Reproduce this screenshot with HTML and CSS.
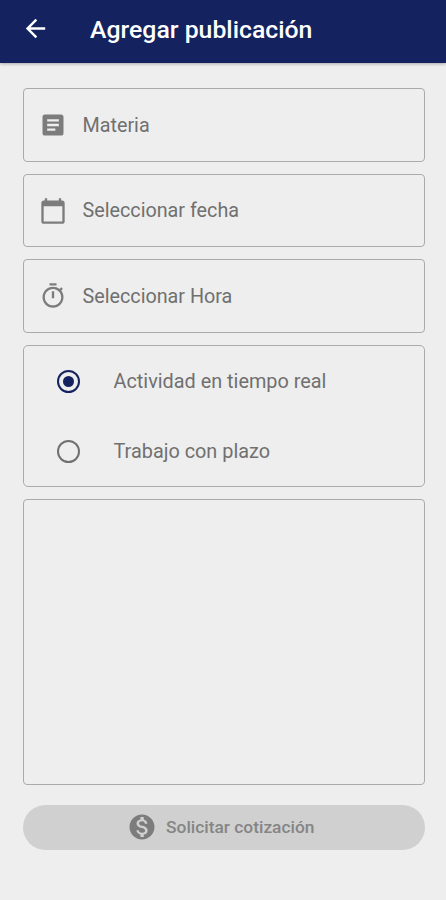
FILE: index.html
```
<!DOCTYPE html>
<html lang="es">
<head>
    <meta charset="UTF-8" />
    <meta name="viewport" content="width=device-width, initial-scale=1.0" />
    <title>Agregar publicación</title>
    <link rel="stylesheet" href="styles.css">
</head>
<body>
    <header class="app-bar">
        <svg class="back-icon" viewBox="0 0 24 24"><path d="M20 11H7.83l5.59-5.59L12 4l-8 8 8 8 1.41-1.41L7.83 13H20v-2z"/></svg>
        <h1>Agregar publicación</h1>
    </header>

    <main class="form">
        <div class="field">
            <svg class="field-icon" viewBox="0 0 24 24"><path d="M19 3H5c-1.1 0-2 .9-2 2v14c0 1.1.9 2 2 2h14c1.1 0 2-.9 2-2V5c0-1.1-.9-2-2-2zm-5 14H7v-2h7v2zm3-4H7v-2h10v2zm0-4H7V7h10v2z"/></svg>
            <span>Materia</span>
        </div>
        <div class="field">
            <svg class="field-icon" viewBox="0 0 24 24"><path d="M20 3h-1V1h-2v2H7V1H5v2H4c-1.1 0-2 .9-2 2v16c0 1.1.9 2 2 2h16c1.1 0 2-.9 2-2V5c0-1.1-.9-2-2-2zm0 18H4V8h16v13z"/></svg>
            <span>Seleccionar fecha</span>
        </div>
        <div class="field">
            <svg class="field-icon" viewBox="0 0 24 24"><path d="M15 1H9v2h6V1zm-4 13h2V8h-2v6zm8.03-6.61l1.42-1.42c-.43-.51-.9-.99-1.41-1.41l-1.42 1.42C16.07 4.74 14.12 4 12 4c-4.97 0-9 4.03-9 9s4.02 9 9 9 9-4.03 9-9c0-2.12-.74-4.07-1.97-5.61zM12 20c-3.87 0-7-3.13-7-7s3.13-7 7-7 7 3.13 7 7-3.13 7-7 7z"/></svg>
            <span>Seleccionar Hora</span>
        </div>

        <div class="options">
            <div class="option">
                <span class="radio selected"></span>
                <span>Actividad en tiempo real</span>
            </div>
            <div class="option">
                <span class="radio"></span>
                <span>Trabajo con plazo</span>
            </div>
        </div>

        <div class="description"></div>

        <button class="submit-btn" disabled>
            <svg class="money-icon" viewBox="0 0 24 24"><path d="M12 2C6.48 2 2 6.48 2 12s4.48 10 10 10 10-4.48 10-10S17.52 2 12 2zm1.41 16.09V20h-2.67v-1.93c-1.71-.36-3.16-1.46-3.27-3.4h1.96c.1 1.05.82 1.87 2.65 1.87 1.96 0 2.4-.98 2.4-1.59 0-.83-.44-1.61-2.67-2.14-2.48-.6-4.18-1.62-4.18-3.67 0-1.72 1.39-2.84 3.11-3.21V4h2.67v1.95c1.86.45 2.79 1.86 2.85 3.39H14.3c-.05-1.11-.64-1.87-2.22-1.87-1.5 0-2.4.68-2.4 1.64 0 .84.65 1.39 2.67 1.91s4.18 1.39 4.18 3.91c-.01 1.83-1.38 2.83-3.12 3.16z"/></svg>
            <span>Solicitar cotización</span>
        </button>
    </main>
</body>
</html>
```
FILE: styles.css
```
:root {
    --bg-color: #eeeeee;
    --bar-color: #14235f;
    --text-color: #707070;
    --icon-color: #7c7c7c;
    --border-color: #aaaaaa;
}
* {
    box-sizing: border-box;
}
body {
    font-family: Roboto, sans-serif;
    margin: 0;
    background-color: var(--bg-color);
    color: var(--text-color);
}
svg {
    fill: currentColor;
    flex-shrink: 0;
}
.app-bar {
    display: flex;
    align-items: center;
    height: 63px;
    padding: 0 21px 6px;
    background: var(--bar-color);
    color: #ffffff;
    box-shadow: 0 1px 3px rgba(0, 0, 0, 0.3);
}
.back-icon {
    width: 29px;
    height: 29px;
}
.app-bar h1 {
    margin: 1px 0 0 40px;
    font-size: 24.8px;
    font-weight: 500;
}
.form {
    display: flex;
    flex-direction: column;
    gap: 12px;
    padding: 25px 21px 0 23px;
}
.field {
    display: flex;
    align-items: center;
    gap: 15.5px;
    height: 73.6px;
    padding: 1px 16px 0 15px;
    border: 1px solid var(--border-color);
    border-radius: 4px;
    font-size: 19.75px;
}
.field-icon {
    width: 28px;
    height: 28px;
    color: var(--icon-color);
}
.options {
    height: 142px;
    padding-top: 1px;
    border: 1px solid var(--border-color);
    border-radius: 5px;
    font-size: 19.85px;
}
.option {
    display: flex;
    align-items: center;
    gap: 33.5px;
    height: 70px;
    padding-left: 33px;
}
.radio {
    display: flex;
    width: 23px;
    height: 23px;
    border: 2px solid var(--text-color);
    border-radius: 50%;
}
.radio.selected {
    border-color: var(--bar-color);
}
.radio.selected::after {
    content: "";
    width: 11px;
    height: 11px;
    margin: auto;
    border-radius: 50%;
    background: var(--bar-color);
}
.description {
    height: 286px;
    border: 1px solid var(--border-color);
    border-radius: 4px;
}
.submit-btn {
    display: flex;
    align-items: center;
    justify-content: center;
    gap: 9.5px;
    height: 45px;
    margin-top: 8px;
    padding: 0 13px 0 6px;
    border: none;
    border-radius: 23px;
    background: #d0d0d0;
    color: #858585;
    font-family: inherit;
    font-size: 17.35px;
    font-weight: 500;
}
.money-icon {
    width: 30px;
    height: 30px;
    color: var(--icon-color);
}
```
